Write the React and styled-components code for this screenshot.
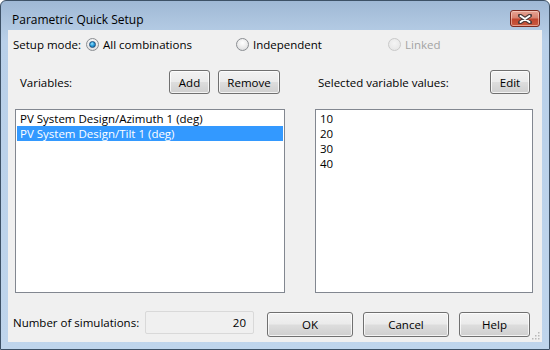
import React from "react";
import styled, { createGlobalStyle } from "styled-components";

const Global = createGlobalStyle`
  html, body { margin: 0; padding: 0; background: #ffffff; }
  body { font-family: "Open Sans", "Noto Sans", sans-serif; font-size: 11.5px; color: #000; }
  * { box-sizing: border-box; }
`;

const Window = styled.div`
  position: relative;
  width: 550px;
  height: 350px;
  border: 1px solid #3d5166;
  border-radius: 6px 6px 0 0;
  background: linear-gradient(to bottom, #9fb8d5 0px, #adc5df 20px, #b9d0e9 40px, #bfd5ec 100%);
  padding: 0 7px 7px 7px;
  display: flex;
  flex-direction: column;
`;

const TitleBar = styled.div`
  height: 29px;
  display: flex;
  align-items: flex-start;
  justify-content: space-between;
  padding: 0 2px 0 4px;
`;

const Title = styled.span`
  font-size: 12px;
  line-height: 16px;
  margin-top: 11px;
  color: #000;
`;

const CloseButton = styled.div`
  width: 30px;
  height: 17px;
  margin-top: 9px;
  border: 1px solid #7b2a20;
  border-radius: 3px;
  background: linear-gradient(to bottom, #e6a495 0%, #d88270 45%, #c0462f 55%, #c95a40 100%);
  box-shadow: inset 0 0 0 1px rgba(255, 220, 210, 0.55);
  display: flex;
  align-items: center;
  justify-content: center;
`;

const Content = styled.div`
  flex: 1;
  background: #f0f0f0;
  position: relative;
  padding: 6px 9px 0 5px;
  display: flex;
  flex-direction: column;
`;

const ModeRow = styled.div`
  display: flex;
  align-items: center;
  height: 16px;
`;

const ModeLabel = styled.span`
  width: 73px;
`;

const RadioOption = styled.label`
  display: flex;
  align-items: center;
  gap: 4px;
  width: ${(p) => p.$width}px;
  color: ${(p) => (p.$disabled ? "#a3a3a3" : "#000")};
`;

const RadioCircle = styled.span`
  width: 13px;
  height: 13px;
  border-radius: 50%;
  border: 1px solid ${(p) => (p.$disabled ? "#c9c9c9" : "#8b8e92")};
  background: ${(p) =>
    p.$disabled
      ? "radial-gradient(circle at 50% 40%, #f4f4f4, #e3e3e3)"
      : "radial-gradient(circle at 50% 35%, #ffffff 0%, #e8e8e8 60%, #cfd2d6 100%)"};
  display: flex;
  align-items: center;
  justify-content: center;
  flex-shrink: 0;
`;

const RadioDot = styled.span`
  width: 7px;
  height: 7px;
  border-radius: 50%;
  background: radial-gradient(circle at 40% 35%, #9fe3ff 0%, #2aa1de 45%, #0f5c9a 100%);
  border: 1px solid #1d4f7c;
`;

const Columns = styled.div`
  display: grid;
  grid-template-columns: 270px 218px;
  column-gap: 30px;
  margin-top: 18px;
  margin-left: 2px;
`;

const Column = styled.div`
  display: flex;
  flex-direction: column;
`;

const HeaderRow = styled.div`
  display: flex;
  align-items: center;
  height: 24px;
  padding-left: ${(p) => p.$pad}px;
`;

const HeaderLabel = styled.span`
  flex: 1;
`;

const Button = styled.button`
  font-family: inherit;
  font-size: 11.5px;
  color: #000;
  width: ${(p) => p.$w}px;
  height: ${(p) => p.$h || 24}px;
  margin-left: ${(p) => p.$ml || 0}px;
  margin-right: ${(p) => p.$mr || 0}px;
  border: 1px solid #707070;
  border-radius: 3px;
  padding: 0;
  background: linear-gradient(to bottom, #f2f2f2 0%, #ebebeb 48%, #dddddd 52%, #cfcfcf 100%);
  box-shadow: inset 0 0 0 1px rgba(255, 255, 255, 0.75);
  display: flex;
  align-items: center;
  justify-content: center;
`;

const ListBox = styled.div`
  margin-top: 15px;
  height: 184px;
  border: 1px solid #828790;
  background: #ffffff;
  padding: 1px;
`;

const ListItem = styled.div`
  height: 15px;
  line-height: 15px;
  padding-left: 3px;
  background: ${(p) => (p.$selected ? "#3399ff" : "transparent")};
  color: ${(p) => (p.$selected ? "#ffffff" : "#000")};
  white-space: nowrap;
`;

const Footer = styled.div`
  display: flex;
  align-items: center;
  margin-top: 15px;
`;

const FooterLabel = styled.span`
  width: 132px;
`;

const CountField = styled.div`
  width: 109px;
  height: 23px;
  border: 1px solid #d9d9d9;
  border-radius: 2px;
  background: #f0f0f0;
  display: flex;
  align-items: center;
  justify-content: flex-end;
  padding-right: 7px;
  margin-right: 13px;
`;

const ButtonGroup = styled.div`
  display: flex;
  gap: 10px;
  margin-top: 4px;
`;

const Grip = styled.svg`
  position: absolute;
  right: 2px;
  bottom: 2px;
`;

function Radio({ label, checked, disabled, width }) {
  return (
    <RadioOption $width={width} $disabled={disabled}>
      <RadioCircle $disabled={disabled}>{checked && <RadioDot />}</RadioCircle>
      {label}
    </RadioOption>
  );
}

export default function App() {
  return (
    <>
      <Global />
      <Window>
        <TitleBar>
          <Title>Parametric Quick Setup</Title>
          <CloseButton>
            <svg width="14" height="10" viewBox="0 0 14 10">
              <path d="M2 1.5 L12 8.5 M12 1.5 L2 8.5" stroke="#4a3a3a" strokeWidth="4" strokeLinecap="round" />
              <path d="M2.5 2 L11.5 8 M11.5 2 L2.5 8" stroke="#ffffff" strokeWidth="2" strokeLinecap="round" />
            </svg>
          </CloseButton>
        </TitleBar>
        <Content>
          <ModeRow>
            <ModeLabel>Setup mode:</ModeLabel>
            <Radio label="All combinations" checked width={150} />
            <Radio label="Independent" width={152} />
            <Radio label="Linked" disabled width={80} />
          </ModeRow>
          <Columns>
            <Column>
              <HeaderRow $pad={5}>
                <HeaderLabel>Variables:</HeaderLabel>
                <Button $w={41}>Add</Button>
                <Button $w={62} $ml={8} $mr={5}>Remove</Button>
              </HeaderRow>
              <ListBox>
                <ListItem>PV System Design/Azimuth 1 (deg)</ListItem>
                <ListItem $selected>PV System Design/Tilt 1 (deg)</ListItem>
              </ListBox>
            </Column>
            <Column>
              <HeaderRow $pad={3}>
                <HeaderLabel>Selected variable values:</HeaderLabel>
                <Button $w={40} $mr={3}>Edit</Button>
              </HeaderRow>
              <ListBox>
                <ListItem>10</ListItem>
                <ListItem>20</ListItem>
                <ListItem>30</ListItem>
                <ListItem>40</ListItem>
              </ListBox>
            </Column>
          </Columns>
          <Footer>
            <FooterLabel>Number of simulations:</FooterLabel>
            <CountField>20</CountField>
            <ButtonGroup>
              <Button $w={86} $h={25}>OK</Button>
              <Button $w={86} $h={25}>Cancel</Button>
              <Button $w={71} $h={25}>Help</Button>
            </ButtonGroup>
          </Footer>
          <Grip width="9" height="9" viewBox="0 0 9 9">
            {[
              [7, 1], [4, 4], [7, 4], [1, 7], [4, 7], [7, 7],
            ].map(([x, y]) => (
              <rect key={`${x}-${y}`} x={x} y={y} width="1.5" height="1.5" fill="#b8b8b8" />
            ))}
          </Grip>
        </Content>
      </Window>
    </>
  );
}
